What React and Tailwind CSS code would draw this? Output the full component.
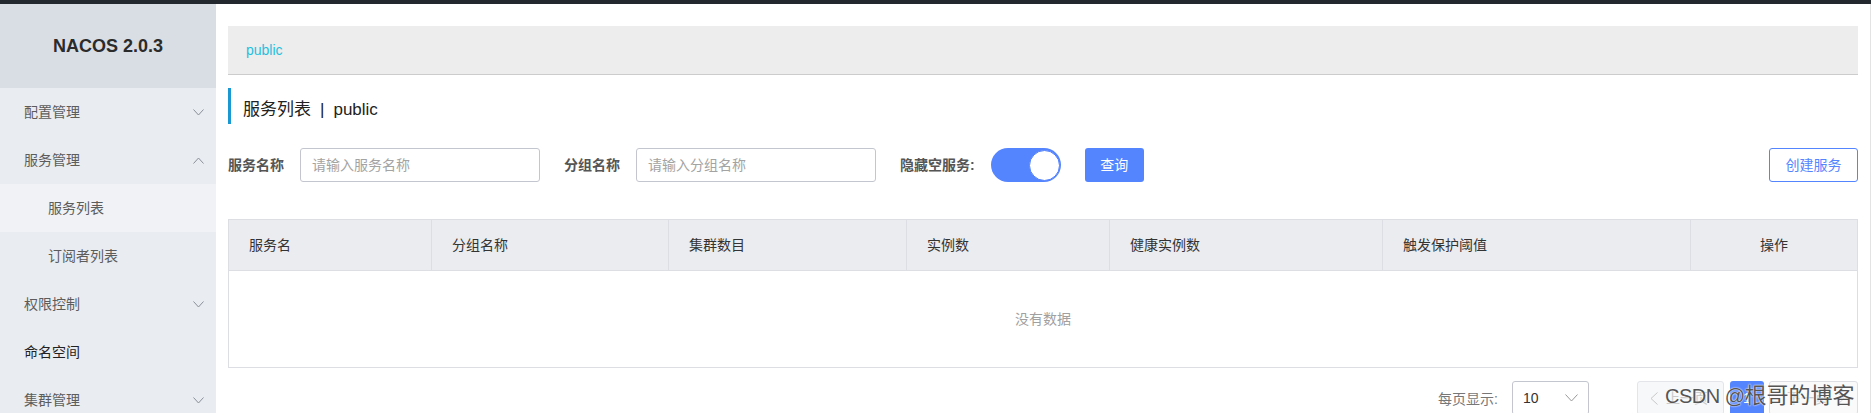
import React from "react";

const FONT = { fontFamily: '"Liberation Sans", "Noto Sans CJK SC", sans-serif' };

function Chevron({ up = false, className = "" }) {
  return (
    <svg width="11" height="7" viewBox="0 0 11 7" className={className} fill="none">
      {up ? (
        <polyline points="0.5,6.5 5.5,1 10.5,6.5" stroke="#8a8f99" strokeWidth="1" />
      ) : (
        <polyline points="0.5,0.5 5.5,6 10.5,0.5" stroke="#8a8f99" strokeWidth="1" />
      )}
    </svg>
  );
}

function MenuItem({ label, level = 1, arrow, active = false, dark = false }) {
  return (
    <div
      className={`h-[48px] shrink-0 flex items-center justify-between pr-[12px] text-[14px] ${
        level === 1 ? "pl-[24px]" : "pl-[48px]"
      } ${active ? "bg-[#f0f2f5]" : ""} ${dark ? "text-[#222]" : "text-[#5c5c5c]"}`}
    >
      <span>{label}</span>
      {arrow === "down" && <Chevron />}
      {arrow === "up" && <Chevron up />}
    </div>
  );
}

const columns = [
  { label: "服务名", w: 203 },
  { label: "分组名称", w: 237 },
  { label: "集群数目", w: 238 },
  { label: "实例数", w: 203 },
  { label: "健康实例数", w: 273 },
  { label: "触发保护阈值", w: 308 },
  { label: "操作", w: 168, center: true },
];

export default function App() {
  return (
    <div className="w-[1871px] h-[413px] overflow-hidden bg-white relative" style={FONT}>
      <div className="h-[4px] bg-[#23282e]" />
      <div className="flex h-[409px]">
        <aside className="w-[216px] shrink-0 bg-[#e9ecf0] overflow-hidden">
          <div className="h-[84px] bg-[#d9dde4] flex items-center justify-center text-[18px] font-bold text-[#2b2b2b]">
            NACOS 2.0.3
          </div>
          <MenuItem label="配置管理" arrow="down" />
          <MenuItem label="服务管理" arrow="up" />
          <MenuItem label="服务列表" level={2} active />
          <MenuItem label="订阅者列表" level={2} />
          <MenuItem label="权限控制" arrow="down" />
          <MenuItem label="命名空间" dark />
          <MenuItem label="集群管理" arrow="down" />
        </aside>

        <main className="flex-1 min-w-0 px-[12px] border-r border-[#e3e3e3] overflow-hidden">
          <div className="mt-[22px] h-[49px] bg-[#ededed] border-b border-[#cccccc] flex items-center pl-[18px] text-[14px] text-[#1fc0df]">
            public
          </div>

          <div className="mt-[13px] h-[36px] border-l-[3px] border-[#1a98d2] pl-[12px] pt-[8px] flex items-center text-[17px] text-[#222]">
            <span>服务列表</span>
            <span className="mx-[9px]">|</span>
            <span>public</span>
          </div>

          <div className="mt-[24px] h-[34px] flex items-center text-[14px]">
            <span className="font-bold text-[#555] w-[72px]">服务名称</span>
            <div className="w-[240px] h-[34px] border border-[#c4c6cf] rounded-[3px] flex items-center pl-[11px] text-[#a3a3a3]">
              请输入服务名称
            </div>
            <span className="font-bold text-[#555] ml-[24px] w-[72px]">分组名称</span>
            <div className="w-[240px] h-[34px] border border-[#c4c6cf] rounded-[3px] flex items-center pl-[11px] text-[#a3a3a3]">
              请输入分组名称
            </div>
            <span className="font-bold text-[#555] ml-[24px]">隐藏空服务:</span>
            <div className="ml-[16px] w-[70px] h-[34px] rounded-full bg-[#5584ff] flex items-center justify-end pr-[1px]">
              <div className="w-[31px] h-[31px] rounded-full bg-white border border-[#5584ff]" />
            </div>
            <button className="ml-[24px] w-[59px] h-[34px] rounded-[3px] bg-[#5584ff] text-white text-[14px]">
              查询
            </button>
            <div className="flex-1" />
            <button className="w-[89px] h-[34px] rounded-[3px] border border-[#5584ff] text-[#5584ff] text-[14px] bg-white">
              创建服务
            </button>
          </div>

          <div className="mt-[37px] border border-[#dcdee3]">
            <div className="flex h-[51px] bg-[#ebecf0] border-b border-[#dcdee3]">
              {columns.map((c, i) => (
                <div
                  key={c.label}
                  className={`flex items-center text-[14px] text-[#333] ${
                    i < columns.length - 1 ? "border-r border-[#dcdee3]" : ""
                  } ${c.center ? "justify-center" : "pl-[20px]"}`}
                  style={{ width: c.w, flex: i === columns.length - 1 ? "1 1 0" : "none" }}
                >
                  {c.label}
                </div>
              ))}
            </div>
            <div className="h-[96px] flex items-center justify-center text-[14px] text-[#a0a0a0]">
              没有数据
            </div>
          </div>

          <div className="mt-[13px] flex items-start justify-end text-[14px]">
            <span className="mt-[8px] text-[#777]">每页显示:</span>
            <div className="ml-[14px] w-[77px] h-[34px] border border-[#c4c6cf] rounded-[3px] flex items-center justify-between pl-[10px] pr-[10px] text-[#333]">
              <span>10</span>
              <svg width="13" height="8" viewBox="0 0 13 8" fill="none">
                <polyline points="0.5,0.5 6.5,7 12.5,0.5" stroke="#999" strokeWidth="1" />
              </svg>
            </div>
            <div className="ml-[48px] w-[87px] h-[34px] border border-[#e3e5ea] rounded-[3px] bg-[#f7f8fa] flex items-center pl-[12px] text-[#c8c8c8]">
              <svg width="8" height="13" viewBox="0 0 8 13" fill="none" className="mr-[8px]">
                <polyline points="7.5,0.5 1,6.5 7.5,12.5" stroke="#c8c8c8" strokeWidth="1" />
              </svg>
              上一页
            </div>
            <div className="ml-[6px] w-[34px] h-[34px] rounded-[3px] bg-[#5584ff] text-white flex items-center justify-center">
              1
            </div>
            <div className="ml-[5px] w-[89px] h-[34px] border border-[#dcdee3] rounded-[3px] bg-[#fafafa] flex items-center justify-end pr-[12px] text-[#c8c8c8]">
              下一页
              <svg width="8" height="13" viewBox="0 0 8 13" fill="none" className="ml-[8px]">
                <polyline points="0.5,0.5 7,6.5 0.5,12.5" stroke="#c8c8c8" strokeWidth="1" />
              </svg>
            </div>
          </div>
        </main>
      </div>

      <div
        className="absolute left-[1665px] top-[385px] flex items-baseline whitespace-nowrap text-[#555] leading-none pointer-events-none"
        style={{ textShadow: "0 0 2px #fff, 0 0 1px #fff" }}
      >
        <span className="text-[20px] tracking-[-0.5px]">CSDN @</span>
        <span className="text-[22px]">根哥的博客</span>
      </div>
    </div>
  );
}
